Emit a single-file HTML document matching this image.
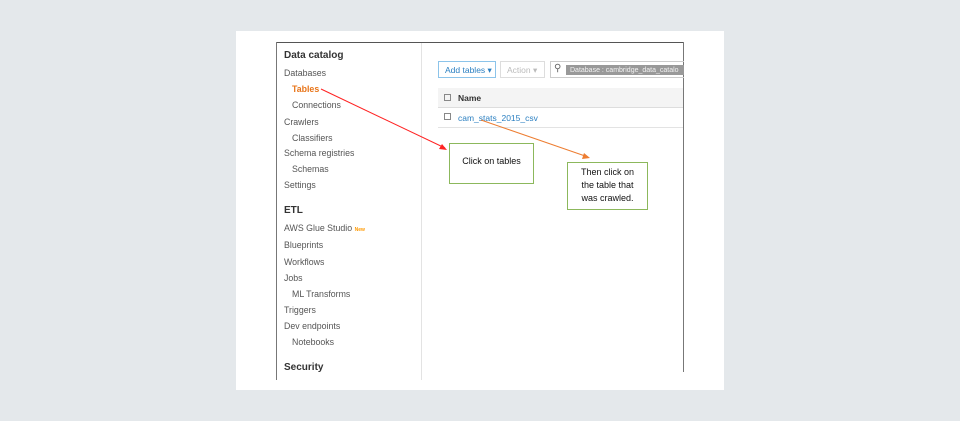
<!DOCTYPE html><html><head><style>
body{margin:0;width:960px;height:421px;background:#e4e8eb;position:relative;overflow:hidden;font-family:"Liberation Sans",Arial,sans-serif}
.a{position:absolute;white-space:nowrap}
.s{font-size:8.8px;color:#555}
.h{font-size:10px;font-weight:bold;color:#333}
</style></head><body>
<div class="a" style="left:236px;top:31px;width:488px;height:359px;background:#fff"></div>
<div class="a" style="left:276px;top:42px;width:407px;height:1px;background:#555"></div>
<div class="a" style="left:276px;top:42px;width:1px;height:338px;background:#777"></div>
<div class="a" style="left:683px;top:42px;width:1px;height:330px;background:#777"></div>
<div class="a" style="left:421px;top:43px;width:1px;height:337px;background:#e3e3e3"></div>
<div class="a h" style="left:284px;top:50px">Data catalog</div>
<div class="a s" style="left:284px;top:68px">Databases</div>
<div class="a s" style="left:292px;top:84px;color:#e8751a;font-weight:bold">Tables</div>
<div class="a s" style="left:292px;top:100px">Connections</div>
<div class="a s" style="left:284px;top:117px">Crawlers</div>
<div class="a s" style="left:292px;top:133px">Classifiers</div>
<div class="a s" style="left:284px;top:148px">Schema registries</div>
<div class="a s" style="left:292px;top:164px">Schemas</div>
<div class="a s" style="left:284px;top:180px">Settings</div>
<div class="a h" style="left:284px;top:205px">ETL</div>
<div class="a s" style="left:284px;top:223px">AWS Glue Studio <span style="color:#f90;font-size:5px;font-weight:bold">New</span></div>
<div class="a s" style="left:284px;top:240px">Blueprints</div>
<div class="a s" style="left:284px;top:257px">Workflows</div>
<div class="a s" style="left:284px;top:273px">Jobs</div>
<div class="a s" style="left:292px;top:289px">ML Transforms</div>
<div class="a s" style="left:284px;top:305px">Triggers</div>
<div class="a s" style="left:284px;top:321px">Dev endpoints</div>
<div class="a s" style="left:292px;top:337px">Notebooks</div>
<div class="a h" style="left:284px;top:362px">Security</div>
<div class="a" style="left:438px;top:61px;width:58px;height:17px;border:1px solid #8cc4ea;font-size:8.5px;color:#2a7fc1;line-height:17px;padding-left:6px;box-sizing:border-box">Add tables ▾</div>
<div class="a" style="left:500px;top:61px;width:45px;height:17px;border:1px solid #ddd;font-size:8.5px;color:#bbb;line-height:17px;padding-left:6px;box-sizing:border-box">Action ▾</div>
<div class="a" style="left:550px;top:61px;width:134px;height:17px;border:1px solid #ccc;border-right:none;box-sizing:border-box"></div>
<div class="a" style="left:554px;top:63px;font-size:10px;color:#666">&#9906;</div>
<div class="a" style="left:566px;top:65px;width:118px;height:10px;background:#999;font-size:7px;color:#f2f2f2;line-height:11px;padding-left:4px;box-sizing:border-box;overflow:hidden">Database : cambridge_data_catalo</div>
<div class="a" style="left:438px;top:88px;width:245px;height:19px;background:#f4f4f4;border-bottom:1px solid #ddd"></div>
<div class="a" style="left:444px;top:94px;width:5px;height:5px;border:1px solid #888"></div>
<div class="a" style="left:458px;top:93px;font-size:8.5px;font-weight:bold;color:#333">Name</div>
<div class="a" style="left:444px;top:113px;width:5px;height:5px;border:1px solid #888"></div>
<div class="a" style="left:458px;top:113px;font-size:8.5px;color:#2a7fc1">cam_stats_2015_csv</div>
<div class="a" style="left:438px;top:127px;width:245px;height:1px;background:#e3e3e3"></div>
<div class="a" style="left:449px;top:143px;width:85px;height:41px;border:1px solid #8cb85c;box-sizing:border-box;font-size:9px;color:#111;text-align:center;line-height:34px;background:#fff">Click on tables</div>
<div class="a" style="left:567px;top:162px;width:81px;height:48px;border:1px solid #8cb85c;box-sizing:border-box;font-size:9px;color:#111;text-align:center;line-height:13px;padding-top:3px;background:#fff">Then click on<br>the table that<br>was crawled.</div>
<svg class="a" style="left:0;top:0" width="960" height="421">
<line x1="321" y1="89" x2="445" y2="148" stroke="#f22" stroke-width="1"/>
<polygon points="447,150 439,149 442,144" fill="#f22"/>
<line x1="481" y1="120" x2="588" y2="157" stroke="#ed7d31" stroke-width="1"/>
<polygon points="590,158 582,159 584,153" fill="#ed7d31"/>
</svg>
</body></html>
